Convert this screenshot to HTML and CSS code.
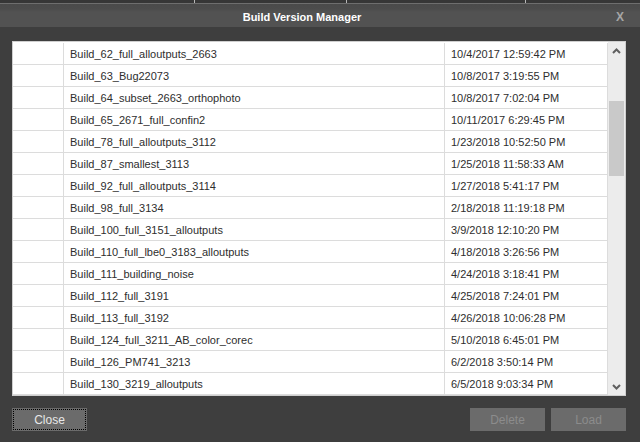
FILE: index.html
```html
<!DOCTYPE html>
<html>
<head>
<meta charset="utf-8">
<link rel="stylesheet" href="styles.css">
</head>
<body>
<div class="screen">
  <div class="strip">
    <div class="cell w1"></div>
    <div class="cell w2"></div>
    <div class="cell w3"></div>
    <div class="cell w4"></div>
  </div>
  <div class="titlebar">
    <div class="title">Build Version Manager</div>
    <div class="close-x">X</div>
  </div>
  <div class="content">
    <div class="listbox">
      <div class="rows">
        <div class="row"><div class="c0"></div><div class="c1">Build_62_full_alloutputs_2663</div><div class="c2">10/4/2017 12:59:42 PM</div></div>
        <div class="row"><div class="c0"></div><div class="c1">Build_63_Bug22073</div><div class="c2">10/8/2017 3:19:55 PM</div></div>
        <div class="row"><div class="c0"></div><div class="c1">Build_64_subset_2663_orthophoto</div><div class="c2">10/8/2017 7:02:04 PM</div></div>
        <div class="row"><div class="c0"></div><div class="c1">Build_65_2671_full_confin2</div><div class="c2">10/11/2017 6:29:45 PM</div></div>
        <div class="row"><div class="c0"></div><div class="c1">Build_78_full_alloutputs_3112</div><div class="c2">1/23/2018 10:52:50 PM</div></div>
        <div class="row"><div class="c0"></div><div class="c1">Build_87_smallest_3113</div><div class="c2">1/25/2018 11:58:33 AM</div></div>
        <div class="row"><div class="c0"></div><div class="c1">Build_92_full_alloutputs_3114</div><div class="c2">1/27/2018 5:41:17 PM</div></div>
        <div class="row"><div class="c0"></div><div class="c1">Build_98_full_3134</div><div class="c2">2/18/2018 11:19:18 PM</div></div>
        <div class="row"><div class="c0"></div><div class="c1">Build_100_full_3151_alloutputs</div><div class="c2">3/9/2018 12:10:20 PM</div></div>
        <div class="row"><div class="c0"></div><div class="c1">Build_110_full_lbe0_3183_alloutputs</div><div class="c2">4/18/2018 3:26:56 PM</div></div>
        <div class="row"><div class="c0"></div><div class="c1">Build_111_building_noise</div><div class="c2">4/24/2018 3:18:41 PM</div></div>
        <div class="row"><div class="c0"></div><div class="c1">Build_112_full_3191</div><div class="c2">4/25/2018 7:24:01 PM</div></div>
        <div class="row"><div class="c0"></div><div class="c1">Build_113_full_3192</div><div class="c2">4/26/2018 10:06:28 PM</div></div>
        <div class="row"><div class="c0"></div><div class="c1">Build_124_full_3211_AB_color_corec</div><div class="c2">5/10/2018 6:45:01 PM</div></div>
        <div class="row"><div class="c0"></div><div class="c1">Build_126_PM741_3213</div><div class="c2">6/2/2018 3:50:14 PM</div></div>
        <div class="row"><div class="c0"></div><div class="c1">Build_130_3219_alloutputs</div><div class="c2">6/5/2018 9:03:34 PM</div></div>
      </div>
      <div class="scrollbar">
        <div class="arrow">
          <svg width="9" height="6" viewBox="0 0 9 6"><polyline points="1,5 4.5,1.5 8,5" fill="none" stroke="#5f5f5f" stroke-width="2"/></svg>
        </div>
        <div class="track"><div class="thumb"></div></div>
        <div class="arrow">
          <svg width="9" height="6" viewBox="0 0 9 6"><polyline points="1,1 4.5,4.5 8,1" fill="none" stroke="#5f5f5f" stroke-width="2"/></svg>
        </div>
      </div>
    </div>
    <div class="buttons">
      <button class="btn focused"><span class="focus-ring">Close</span></button>
      <div class="spacer"></div>
      <button class="btn disabled"><span class="focus-ring none">Delete</span></button>
      <button class="btn disabled"><span class="focus-ring none">Load</span></button>
    </div>
  </div>
</div>
</body>
</html>
```
FILE: styles.css
```css
html, body {
  margin: 0;
  padding: 0;
  background: #3e3e3e;
}
.screen {
  width: 640px;
  height: 442px;
  overflow: hidden;
  background: #3e3e3e;
  font-family: "Liberation Sans", Arial, sans-serif;
}
.strip {
  display: flex;
  height: 3px;
  background: #363636;
  border-bottom: 1px solid #6e6e6e;
}
.cell { height: 3px; }
.w1 { width: 194px; }
.w2 { width: 151px; border-left: 1px solid #b8b8b8; }
.w3 { width: 178px; border-left: 1px solid #b8b8b8; }
.w4 { flex: 1; border-left: 1px solid #b8b8b8; }
.titlebar {
  display: flex;
  align-items: center;
  height: 23px;
  background: linear-gradient(#4a4a4a 0, #4c4c4c 5px, #525252 8px, #525252 100%);
}
.title {
  flex: 1;
  text-align: center;
  color: #ffffff;
  font-weight: bold;
  font-size: 11px;
  padding-top: 2px;
}
.close-x {
  width: 24px;
  padding-left: 12px;
  color: #a6a6a6;
  font-weight: bold;
  font-size: 12px;
  padding-top: 2px;
}
.content {
  padding: 14px 0 0 12px;
}
.listbox {
  display: flex;
  width: 612px;
  border: 1px solid #cfcfcf;
  background: #ffffff;
}
.rows {
  width: 595px;
  padding-top: 1px;
}
.row {
  display: flex;
  height: 21px;
  border-bottom: 1px solid #dcdcdc;
  font-size: 11px;
  color: #2e2e2e;
}
.c0 {
  width: 50px;
  border-right: 1px solid #dcdcdc;
}
.c1 {
  width: 374px;
  padding-left: 6px;
  border-right: 1px solid #dcdcdc;
  line-height: 23px;
  white-space: nowrap;
}
.c2 {
  width: 156px;
  padding-left: 6px;
  border-right: 1px solid #dcdcdc;
  line-height: 23px;
  white-space: nowrap;
}
.scrollbar {
  width: 17px;
  display: flex;
  flex-direction: column;
  background: #ececec;
}
.arrow {
  height: 17px;
  display: flex;
  align-items: center;
  justify-content: center;
}
.arrow svg { display: block; }
.track {
  flex: 1;
  padding-top: 42px;
}
.thumb {
  margin-left: 1px;
  width: 15px;
  height: 75px;
  background: #c9c9c9;
}
.buttons {
  display: flex;
  gap: 6px;
  width: 614px;
  margin-top: 12px;
}
.spacer { flex: 1; }
.btn {
  width: 75px;
  height: 23px;
  padding: 1px;
  margin: 0;
  border: none;
  background: #6b6b6b;
  font-family: "Liberation Sans", Arial, sans-serif;
  font-size: 12px;
  color: #e8e8e8;
  display: flex;
}
.focus-ring {
  flex: 1;
  display: flex;
  align-items: center;
  justify-content: center;
  border: 1px dotted #000000;
}
.focus-ring.none { border-color: transparent; }
.btn.disabled { color: #8c8c8c; }
```
